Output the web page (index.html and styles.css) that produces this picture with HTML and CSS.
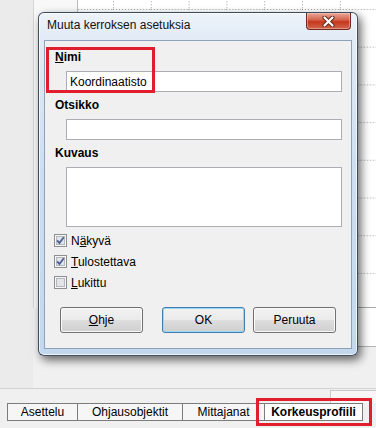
FILE: index.html
```html
<!DOCTYPE html>
<html lang="fi">
  <head>
    <meta charset="UTF-8" />
    <title>Muuta kerroksen asetuksia</title>
    <link rel="stylesheet" href="styles.css">
  </head>
  <body>
    <div class="app">
      <div class="workspace">
        <div class="side"></div>
        <div class="view">
          <div class="ruler"></div>
          <div class="canvas">
            <svg class="grid" width="298" height="307">
              <defs>
                <pattern id="gridcell" x="35" y="9" width="37.8" height="37.7" patternUnits="userSpaceOnUse">
                  <path d="M0 .5H38" stroke="#9c9c9c" stroke-dasharray="1 2" />
                  <path d="M.5 0V38" stroke="#9c9c9c" stroke-dasharray="1 2" />
                </pattern>
              </defs>
              <rect width="100%" height="100%" fill="url(#gridcell)" />
            </svg>
          </div>
          <div class="strip"></div>
        </div>
      </div>

      <div class="tabbar">
        <div class="stub"></div>
        <div class="tabs">
          <div class="tab tab-1">Asettelu</div>
          <div class="tab tab-2">Ohjausobjektit</div>
          <div class="tab tab-3">Mittajanat</div>
          <div class="tab tab-4 active">Korkeusprofiili</div>
        </div>
      </div>
    </div>

    <div class="dialog">
      <div class="titlebar">
        <span class="title">Muuta kerroksen asetuksia</span>
        <button class="close" type="button">
          <svg width="13" height="11" viewBox="0 0 13 11">
            <path d="M2.5 1.5L10.5 9.5M10.5 1.5L2.5 9.5" stroke="#5a2418" stroke-width="4" stroke-linecap="round" />
            <path d="M2.5 1.5L10.5 9.5M10.5 1.5L2.5 9.5" stroke="#ffffff" stroke-width="2.2" stroke-linecap="round" />
          </svg>
        </button>
      </div>

      <div class="client">
        <div class="highlight"></div>

        <div class="label"><u>N</u>imi</div>
        <input class="textbox" type="text" value="Koordinaatisto" />

        <div class="label">Otsikko</div>
        <input class="textbox" type="text" value="" />

        <div class="label">Kuvaus</div>
        <textarea class="textbox area"></textarea>

        <div class="checks">
          <label class="check">
            <svg width="13" height="13" viewBox="0 0 13 13">
              <rect x=".5" y=".5" width="12" height="12" fill="#f6f6f6" stroke="#8e8f8f" />
              <rect x="2.5" y="2.5" width="8" height="8" fill="#e2e4e7" stroke="#b4b8bd" />
              <path d="M3.2 6.4L5.4 9L9.8 3.2" stroke="#4b5f96" stroke-width="1.8" fill="none" />
            </svg>
            <span>N<u>ä</u>kyvä</span>
          </label>
          <label class="check">
            <svg width="13" height="13" viewBox="0 0 13 13">
              <rect x=".5" y=".5" width="12" height="12" fill="#f6f6f6" stroke="#8e8f8f" />
              <rect x="2.5" y="2.5" width="8" height="8" fill="#e2e4e7" stroke="#b4b8bd" />
              <path d="M3.2 6.4L5.4 9L9.8 3.2" stroke="#4b5f96" stroke-width="1.8" fill="none" />
            </svg>
            <span><u>T</u>ulostettava</span>
          </label>
          <label class="check">
            <svg width="13" height="13" viewBox="0 0 13 13">
              <rect x=".5" y=".5" width="12" height="12" fill="#f6f6f6" stroke="#8e8f8f" />
              <rect x="2.5" y="2.5" width="8" height="8" fill="#e2e4e7" stroke="#b4b8bd" />
            </svg>
            <span><u>L</u>ukittu</span>
          </label>
        </div>

        <div class="buttons">
          <button type="button" class="btn"><u>O</u>hje</button>
          <button type="button" class="btn default">OK</button>
          <button type="button" class="btn">Peruuta</button>
        </div>
      </div>
    </div>
  </body>
</html>
```

FILE: styles.css
```css
* {
  box-sizing: border-box;
}
body {
  margin: 0;
  width: 376px;
  height: 428px;
  overflow: hidden;
  position: relative;
  background-color: #f0f0f0;
  font-family: "Liberation Sans", Arial, sans-serif;
  font-size: 12px;
  color: #000;
}

/* background application */
.workspace {
  display: flex;
  height: 389px;
  border-bottom: 1px solid #d2d2d2;
}
.side {
  width: 33px;
  background-color: #ebebeb;
}
.view {
  flex: 1;
  display: grid;
  grid-template-columns: 45px 1fr;
  grid-template-rows: 308px 39px;
  align-content: start;
}
.ruler {
  background-color: #f8f8f8;
  border-left: 1px solid #d6d6d6;
  border-right: 1px solid #bdbdbd;
}
.canvas {
  background-color: #fff;
  border-bottom: 1px solid #a9a9a9;
}
.grid {
  display: block;
}
.strip {
  grid-column: 2;
  background-color: #fff;
  border-bottom: 1px solid #b5b5b5;
}

.tabbar {
  display: flex;
  flex-direction: column;
  height: 39px;
}
.stub {
  align-self: flex-end;
  width: 46px;
  height: 13px;
  margin-top: 1px;
  background-color: #f7f7f7;
  border-top: 1px solid #c9c9c9;
  border-left: 1px solid #c9c9c9;
}
.tabs {
  display: flex;
  margin-left: 7px;
  height: 18px;
}
.tab {
  border: 1px solid #7c7c7c;
  border-left: none;
  background-color: #f6f6f6;
  text-align: center;
  line-height: 16px;
}
.tab-1 {
  width: 71px;
  border-left: 1px solid #7c7c7c;
}
.tab-2 {
  width: 105px;
}
.tab-3 {
  width: 82px;
}
.tab-4 {
  width: 98px;
}
.tab.active {
  position: relative;
  background-color: #fff;
  font-weight: bold;
}
.tab.active::after {
  content: "";
  position: absolute;
  left: -9px;
  right: -10px;
  top: -6px;
  bottom: -6px;
  border: 3px solid #e11f2c;
}

/* dialog */
.dialog {
  position: absolute;
  left: 38px;
  top: 12px;
  width: 320px;
  height: 344px;
  display: flex;
  flex-direction: column;
  padding: 0 5px 6px 5px;
  border: 1px solid rgba(28, 40, 58, 0.8);
  border-radius: 6px;
  background: linear-gradient(
    to bottom,
    #edf3fa 0,
    #e1ebf6 27px,
    #cddff1 45%,
    #c3d8ee 100%
  );
  box-shadow: inset 0 0 0 1px rgba(255, 255, 255, 0.7),
    3px 4px 10px rgba(0, 0, 0, 0.6);
}
.titlebar {
  display: flex;
  align-items: flex-start;
  height: 27px;
}
.title {
  padding: 5px 0 0 3px;
  line-height: 14px;
  color: #111;
}
.close {
  margin-left: auto;
  margin-right: 1px;
  width: 45px;
  height: 17px;
  padding: 0;
  display: flex;
  align-items: center;
  justify-content: center;
  border: 1px solid #6e2a1f;
  border-top: none;
  border-radius: 0 0 4px 4px;
  background: linear-gradient(
    to bottom,
    #e9a897 0%,
    #d66a53 40%,
    #c6381d 55%,
    #d0654c 100%
  );
  box-shadow: inset 0 0 0 1px rgba(255, 210, 200, 0.45);
}

.client {
  position: relative;
  height: 309px;
  padding: 9px 0 0 10px;
  border: 1px solid #8ea2bc;
  background-color: #f0f0f0;
}
.highlight {
  position: absolute;
  left: 1px;
  top: 6px;
  width: 109px;
  height: 46px;
  border: 3px solid #e11f2c;
}
.label {
  position: relative;
  height: 14px;
  line-height: 14px;
  font-weight: bold;
}
.textbox + .label {
  margin-top: 6px;
}
.textbox {
  display: block;
  width: 276px;
  height: 21px;
  margin: 7px 0 0 11px;
  padding: 0 3px;
  border: 1px solid #abadb3;
  background-color: #fff;
  font: inherit;
  color: #000;
  line-height: 19px;
}
.area {
  height: 60px;
  resize: none;
}
.checks {
  margin-top: 3px;
  margin-left: -1px;
}
.check {
  display: flex;
  align-items: center;
  gap: 4px;
  height: 21px;
}
.check svg {
  display: block;
}
.buttons {
  display: flex;
  margin: 14px 0 0 5px;
}
.btn {
  width: 83px;
  height: 26px;
  padding: 0;
  border: 1px solid #707070;
  border-radius: 3px;
  background: linear-gradient(
    to bottom,
    #f2f2f2 0%,
    #ebebeb 48%,
    #dddddd 52%,
    #cfcfcf 100%
  );
  box-shadow: inset 0 0 0 1px #fbfbfb;
  font: inherit;
  color: #000;
}
.btn.default {
  margin-left: 19px;
  border-color: #3c7fb1;
  box-shadow: inset 0 0 0 1px #9fd5f2;
}
.btn.default + .btn {
  margin-left: 8px;
}
```
